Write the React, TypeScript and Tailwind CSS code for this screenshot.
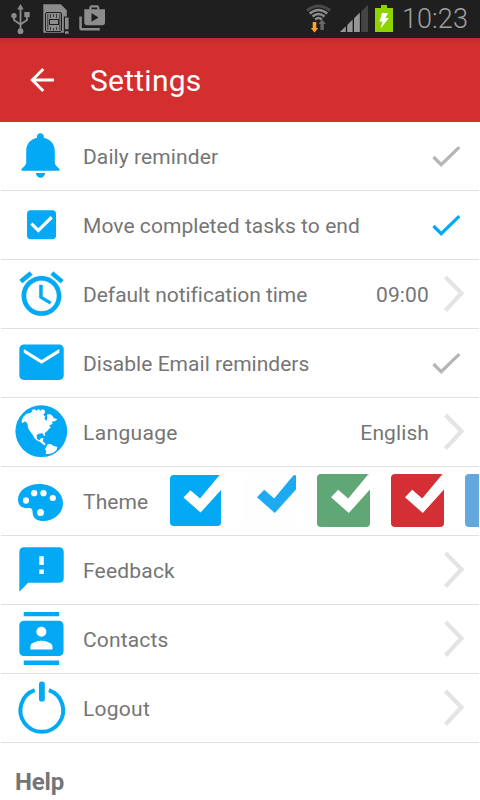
import type { ReactNode } from "react";

const BLUE = "#03a9f4";

function StatusBar() {
  return (
    <div className="flex h-[38px] items-start justify-between bg-[#1f1f1f] pr-3">
      <svg width="110" height="38" viewBox="0 0 110 38" fill="#8c8c8c">
        <path d="M20.500 4l3.200 5.500h-6.400z" />
        <circle cx="20.500" cy="31.200" r="2.900" />
        <circle cx="14" cy="15.700" r="2.700" />
        <path d="M24.300 12h5.400v5.200h-5.400z" />
        <path d="M20.500 8v22M14 15v5l6.500 4.500M27 15v5l-6.500 4.500" fill="none" stroke="#8c8c8c" strokeWidth="1.800" />
        <path d="M43.300 4.300h17.500l6 6V17h-2.600v15.700H43.300z" />
        <g fill="none" stroke="#1f1f1f" strokeWidth="1">
          <rect x="45.500" y="12.500" width="16" height="19" rx="1.500" />
          <rect x="49.500" y="19.500" width="9" height="5" />
        </g>
        <path d="M50.500 14v4M53.500 14v3M56.500 14v4M50.500 27v3M53.500 28v2.500M56.500 27v3M47.800 14v16M59.800 14v16" fill="none" stroke="#3a3a3a" strokeWidth="1" />
        <path d="M63.800 16.500h5.800v17.500h-5.800z" fill="#1f1f1f" />
        <path d="M65 17.500h3.600v11.800H65zM65 31.200h3.600v2.600H65z" />
        <path d="M79.300 16.500h2.500v11.600h18v2.400H81.500q-2.200 0-2.200-2.200z" />
        <path fillRule="evenodd" d="M84.300 9.200h5V8q0-2.700 2.700-2.700h5Q99.300 5.300 99.300 8v1.200h5.700v13.300q0 2.800-2.800 2.800H87q-2.700 0-2.700-2.800zm7.200 0h5.700V7.500h-5.700zm0 3.800v8.800l7-4.400z" />
      </svg>
      <div className="flex items-start">
        <svg width="90" height="38" viewBox="305 0 90 38">
          <g fill="none" strokeWidth="2.500">
            <path d="M307 10.500Q318.500 1.500 330 10.500" stroke="#4a4a4a" strokeWidth="3" />
            <path d="M309.700 13.500Q318.500 6.500 327.300 13.500" stroke="#8c8c8c" />
            <path d="M312.500 16.500Q318.500 11.500 324.500 16.500M315.200 19.500Q318.500 16.500 321.800 19.500" stroke="#8c8c8c" />
          </g>
          <path d="M312.700 22h3.600v6h1.900l-3.700 4.500-3.700-4.500h1.900z" fill="#ffa22b" />
          <path d="M320.400 30h3.400v-6h2l-3.700-4.500-3.700 4.500h2z" fill="#686868" />
          <path d="M340 32L368 4.800V32z" fill="#454545" />
          <path d="M340 32L360.500 12V32z" fill="#969696" />
          <path d="M346.500 24v8M353.300 17v15M360.500 10v22" stroke="#151515" strokeWidth="1.300" />
          <path d="M375 8h6V5h6v3h6v24h-18z" fill="#8fd400" />
          <path d="M382 13h6l-2.500 5h3.500l-8.500 10.500 2-7h-3z" fill="#fff" />
        </svg>
        <span className="ml-[7px] mt-[3px] text-[27px] font-light leading-[33px] tracking-[0.100px] text-[#a0a0a0]">10:23</span>
      </div>
    </div>
  );
}

function Icon({ children }: { children: ReactNode }) {
  return (
    <svg className="shrink-0" width="82" height="68" viewBox="0 0 82 68" fill={BLUE}>
      {children}
    </svg>
  );
}

function Check({ color }: { color: string }) {
  return (
    <svg className="mr-[18px]" width="30" height="24" viewBox="431 22 30 24">
      <path d="M433.500 35L441.200 42.700L459.300 25.200" fill="none" stroke={color} strokeWidth="3.200" />
    </svg>
  );
}

function Chevron() {
  return (
    <svg className="ml-[14px] mr-[13px]" width="23" height="38" viewBox="443 15 23 38">
      <path d="M445.500 17L461.500 33.200L445.500 50.500" fill="none" stroke="#e4e4e4" strokeWidth="4.200" />
    </svg>
  );
}

function Row({ icon, label, right, spacing }: { icon: ReactNode; label: string; right: ReactNode; spacing: string }) {
  return (
    <div className="mx-px flex h-[69px] items-center overflow-hidden border-b border-[#e0e0e0]">
      <div className="-ml-px flex shrink-0">{icon}</div>
      <span className={"ml-[1px] shrink-0 whitespace-nowrap pt-[2px] text-[21px] leading-[30px] " + spacing}>{label}</span>
      {right}
    </div>
  );
}

function Tile({ fill, mark, size = 53 }: { fill: string; mark: string; size?: number }) {
  return (
    <svg className="shrink-0" width={size} height={size} viewBox="0 0 53 53">
      <rect width="53" height="53" rx="4" fill={fill} />
      <path d="M14 23.300L21.200 15.800L31.200 24.500L50.500 1.300L53 1.300V15.500L31.800 39z" fill={mark} />
    </svg>
  );
}

const bell = (
  <Icon>
    <path d="M40.300 11.300c-2 0-3.300 1.300-3.300 3.500v1C30.500 17.300 26.200 22 26.200 29v11.500c0 2-1.500 3.500-4.700 6.500v1.800h38V47c-3.200-3-4.700-4.500-4.700-6.500V29c0-7-4.500-11.700-11-13.200v-1c0-2.200-1.500-3.500-3.500-3.500zM35.800 51h9.400c-.5 3-2.300 4.800-4.700 4.800S36.300 54 35.800 51z" />
  </Icon>
);
const checkbox = (
  <Icon>
    <path transform="translate(22.200 14.500) scale(1.610)" d="M19 3H5c-1.110 0-2 .9-2 2v14c0 1.100.89 2 2 2h14c1.110 0 2-.9 2-2V5c0-1.100-.89-2-2-2zm-9 14l-5-5 1.410-1.410L10 14.170l7.590-7.590L19 8l-9 9z" />
  </Icon>
);
const alarm = (
  <Icon>
    <path transform="translate(15.100 7.300) scale(2.200)" stroke={BLUE} strokeWidth="0.120" d="M22 5.720l-4.600-3.860-1.290 1.530 4.600 3.860L22 5.720zM7.880 3.390L6.600 1.860 2 5.710l1.290 1.530 4.590-3.850zM12.500 8H11v6l4.750 2.850.75-1.230-4-2.370V8zM12 4c-4.970 0-9 4.030-9 9s4.020 9 9 9c4.970 0 9-4.030 9-9s-4.030-9-9-9zm0 16c-3.870 0-7-3.130-7-7s3.130-7 7-7 7 3.130 7 7-3.130 7-7 7z" />
  </Icon>
);
const mail = (
  <Icon>
    <path transform="translate(14.900 6.600) scale(2.220)" d="M20 4H4c-1.100 0-1.990.9-1.990 2L2 18c0 1.100.9 2 2 2h16c1.100 0 2-.9 2-2V6c0-1.100-.9-2-2-2zm0 3.700l-8 5-8-5V6l8 5 8-5v1.700z" />
  </Icon>
);
const globe = (
  <Icon>
    <circle cx="41.300" cy="33.200" r="25.900" />
    <g fill="#fff" transform="translate(0 -2) scale(0.3333)">
      <path d="M65 74L70 62L80 53L92 50L98 45L94 42L104 40L110 44L116 39L121 44L126 40L134 42L135 50L130 56L136 62L133 68L140 75L142 62L140 56L150 54L158 60L161 66L172 70L166 75L156 77L158 84L148 88L152 95L146 100L141 106L134 112L136 120L132 119L127 112L116 113L110 118L111 129L118 133L124 126L131 127L128 136L134 140L137 147L130 146L121 138L110 133L103 126L98 116L90 106L84 96L83 84L76 76L66 82Z" />
      <path d="M138 154L143 145L152 144L160 149L172 153L170 162L160 170L148 174L137 174L139 165L135 160Z" />
    </g>
  </Icon>
);
const palette = (
  <Icon>
    <path d="M39.500 17C27 17 18 24 18 32.500c0 6 4 9 10 8.600 3.500-.2 4.500.9 4.600 4.400.2 6 4.400 8.500 11 8.500 10.500 0 19.400-8 19.400-17.500C63 25.500 52.500 17 39.500 17z" />
    <g fill="#fff">
      <ellipse cx="26" cy="33.500" rx="3" ry="3.200" />
      <circle cx="34.200" cy="26.200" r="3.100" />
      <circle cx="43.500" cy="26.200" r="3.100" />
      <circle cx="52.800" cy="31" r="3.100" />
      <circle cx="40.500" cy="45.500" r="3.500" />
    </g>
  </Icon>
);
const feedback = (
  <Icon>
    <path transform="translate(14.900 6.900) scale(2.220)" d="M20 2H4c-1.100 0-1.990.9-1.990 2L2 22l4-4h14c1.100 0 2-.9 2-2V4c0-1.100-.9-2-2-2zm-7 12h-2v-2h2v2zm0-4h-2V6h2v4z" />
  </Icon>
);
const contacts = (
  <Icon>
    <path transform="translate(14.900 6.900) scale(2.210)" d="M20 0H4v2h16V0zM4 24h16v-2H4v2zM20 4H4c-1.100 0-2 .9-2 2v12c0 1.100.9 2 2 2h16c1.100 0 2-.9 2-2V6c0-1.100-.9-2-2-2zm-8 2.750c1.240 0 2.250 1.010 2.250 2.250s-1.010 2.250-2.250 2.250S9.750 10.240 9.750 9 10.760 6.750 12 6.750zM17 17H7v-1.500c0-1.670 3.330-2.500 5-2.500s5 .83 5 2.500V17z" />
  </Icon>
);
const power = (
  <Icon>
    <path d="M34.700 16.200A21.400 21.400 0 1 0 48.900 16.200" fill="none" stroke={BLUE} strokeWidth="4" />
    <rect x="39" y="7.400" width="5.800" height="20.200" rx="2.600" />
  </Icon>
);

export default function App() {
  return (
    <div className="flex h-[800px] w-[480px] flex-col overflow-hidden bg-white text-[#757575]" style={{ fontFamily: 'Roboto, "Liberation Sans", sans-serif' }}>
      <StatusBar />
      <header className="flex h-[84px] shrink-0 items-center bg-[#d32f2f] bg-[linear-gradient(#c02b2b,#d32f2f_7px)] text-white">
        <svg className="ml-[29px]" width="26" height="26" viewBox="29 67 26 26" fill="none" stroke="#fff" strokeWidth="2.900">
          <path d="M54 80H32M43.300 69L32.300 80L43.300 91" />
        </svg>
        <h1 className="ml-[35px] pt-[2px] text-[30px] leading-[36px] tracking-[0.250px]">Settings</h1>
      </header>
      <main className="flex flex-col">
        <Row icon={bell} label="Daily reminder" spacing="tracking-[0.090px]" right={<div className="ml-auto"><Check color="#b5b5b5" /></div>} />
        <Row icon={checkbox} label="Move completed tasks to end" spacing="tracking-[0.060px]" right={<div className="ml-auto"><Check color={BLUE} /></div>} />
        <Row icon={alarm} label="Default notification time" spacing="tracking-[-0.030px]" right={<div className="ml-auto flex items-center"><span className="pt-[2px] text-[21px] leading-[30px] tracking-[0.150px]">09:00</span><Chevron /></div>} />
        <Row icon={mail} label="Disable Email reminders" spacing="tracking-[0.030px]" right={<div className="ml-auto"><Check color="#b5b5b5" /></div>} />
        <Row icon={globe} label="Language" spacing="tracking-[0.350px]" right={<div className="ml-auto flex items-center"><span className="pt-[2px] text-[21px] leading-[30px] tracking-[0.100px]">English</span><Chevron /></div>} />
        <Row
          icon={palette}
          label="Theme"
          spacing="tracking-[0.100px] w-[87px]"
          right={
            <div className="-mt-px flex h-[53px] shrink-0 items-center gap-[21px]">
              <div className="mr-px flex"><Tile fill={BLUE} mark="#fff" size={51} /></div>
              <Tile fill="#fefefe" mark="#1daaf1" />
              <Tile fill="#5fa775" mark="#fff" />
              <Tile fill="#d32f34" mark="#fff" />
              <Tile fill="#63a8dc" mark="#fff" />
            </div>
          }
        />
        <Row icon={feedback} label="Feedback" spacing="tracking-[0.200px]" right={<div className="ml-auto"><Chevron /></div>} />
        <Row icon={contacts} label="Contacts" spacing="tracking-[0.150px]" right={<div className="ml-auto"><Chevron /></div>} />
        <Row icon={power} label="Logout" spacing="tracking-[0.250px]" right={<div className="ml-auto"><Chevron /></div>} />
        <h2 className="ml-[15px] mt-[24px] text-[24px] font-bold leading-[30px] tracking-[-0.200px]">Help</h2>
      </main>
    </div>
  );
}
